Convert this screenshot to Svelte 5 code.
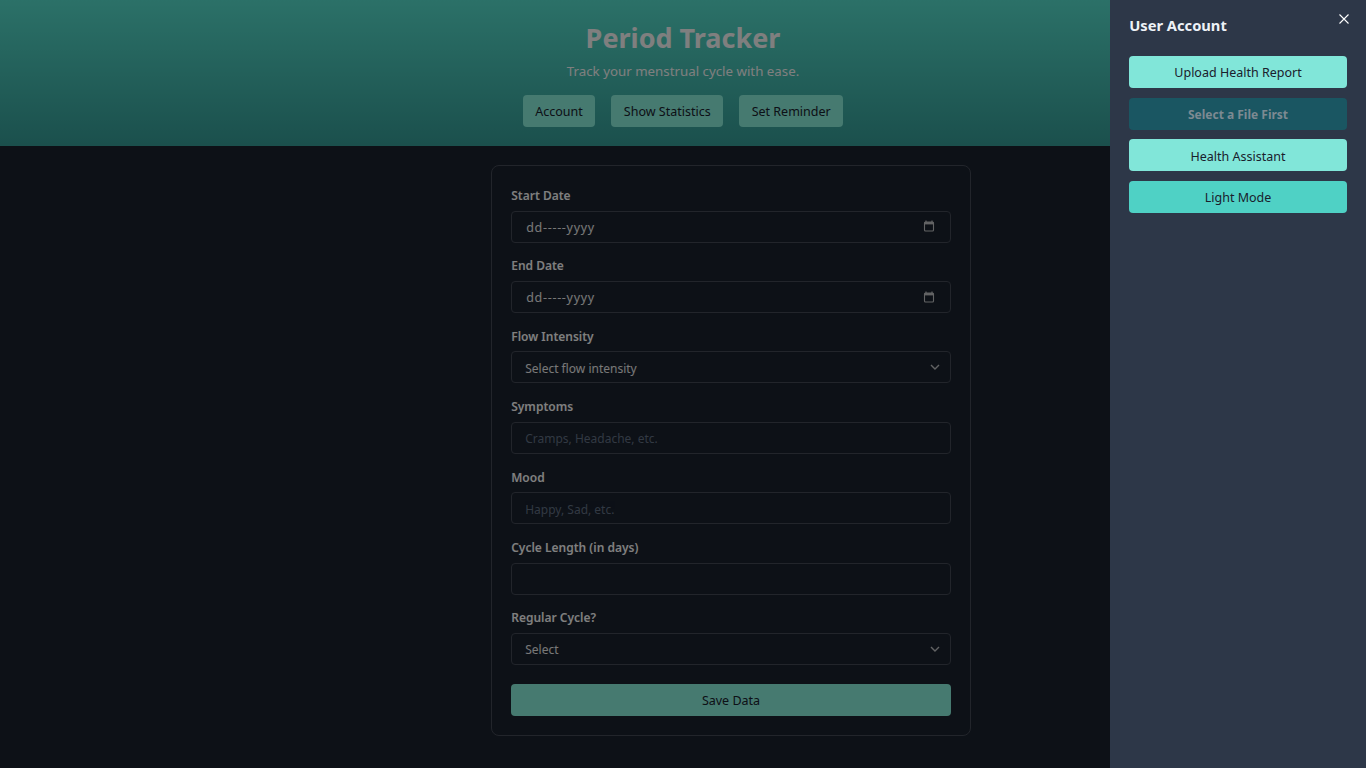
<script>
  const fields = [
    { label: "Start Date", kind: "date" },
    { label: "End Date", kind: "date" },
    { label: "Flow Intensity", kind: "select", value: "Select flow intensity" },
    { label: "Symptoms", kind: "text", placeholder: "Cramps, Headache, etc." },
    { label: "Mood", kind: "text", placeholder: "Happy, Sad, etc." },
    { label: "Cycle Length (in days)", kind: "text", placeholder: "" },
    { label: "Regular Cycle?", kind: "select", value: "Select" },
  ];
</script>

<div class="page">
  <header class="hero">
    <h1>Period Tracker</h1>
    <p>Track your menstrual cycle with ease.</p>
    <nav class="actions">
      <button class="btn">Account</button>
      <button class="btn">Show Statistics</button>
      <button class="btn">Set Reminder</button>
    </nav>
  </header>

  <main>
    <form class="card" onsubmit={(e) => e.preventDefault()}>
      {#each fields as f}
        <div class="field">
          <label for={f.label}>{f.label}</label>
          {#if f.kind === "date"}
            <div class="control">
              <input id={f.label} class="date" type="text" value="dd-----yyyy" />
              <svg class="picker" width="12" height="12" viewBox="0 0 12 12" aria-hidden="true">
                <path d="M3 0.5v1.5M9 0.5v1.5" stroke="#f0f0f0" stroke-width="1.2" fill="none" />
                <rect x="1.5" y="2" width="9" height="9" rx="1" stroke="#f0f0f0" stroke-width="1.1" fill="none" />
                <rect x="1.5" y="2" width="9" height="2.4" fill="#f0f0f0" />
              </svg>
            </div>
          {:else if f.kind === "select"}
            <div class="control">
              <select id={f.label}>
                <option>{f.value}</option>
              </select>
              <svg class="chevron" width="10" height="6" viewBox="0 0 10 6" aria-hidden="true">
                <path d="M1 1l4 4 4-4" stroke="#f0f0f0" stroke-width="1.4" fill="none" />
              </svg>
            </div>
          {:else}
            <input id={f.label} type="text" placeholder={f.placeholder} />
          {/if}
        </div>
      {/each}
      <button class="btn save" type="submit">Save Data</button>
    </form>
  </main>
</div>

<div class="backdrop"></div>

<aside class="drawer">
  <button class="close" aria-label="Close">
    <svg width="10" height="10" viewBox="0 0 10 10" aria-hidden="true">
      <path d="M0.5 0.5l9 9M9.5 0.5l-9 9" stroke="#fff" stroke-width="1.1" fill="none" />
    </svg>
  </button>
  <h2>User Account</h2>
  <div class="menu">
    <button class="item">Upload Health Report</button>
    <button class="item disabled" disabled>Select a File First</button>
    <button class="item">Health Assistant</button>
    <button class="item accent">Light Mode</button>
  </div>
</aside>

<style>
  :global(body) {
    background: #1a222e;
    font-family: "Noto Sans", "Open Sans", sans-serif;
    overflow: hidden;
  }

  .page {
    min-height: 768px;
    color: #f7fafc;
  }

  .hero {
    height: 146px;
    box-sizing: border-box;
    padding-top: 19px;
    text-align: center;
    background: linear-gradient(180deg, #57e2d0 0%, #36a09a 100%);
  }

  h1 {
    margin: 0;
    font-size: 27px;
    line-height: 38px;
    font-weight: 700;
    color: #fff;
  }

  .hero p {
    margin: 5px 0 0;
    font-size: 13.3px;
    line-height: 18px;
    color: #fff;
  }

  .actions {
    display: flex;
    justify-content: center;
    gap: 16px;
    margin-top: 15px;
  }

  .btn {
    height: 32px;
    padding: 0 12.5px;
    border: 0;
    border-radius: 4px;
    background: #8cf4e0;
    color: #1a222e;
    font: inherit;
    font-size: 12.5px;
  }

  main {
    display: flex;
    justify-content: center;
    padding-top: 19px;
    padding-left: 96px;
  }

  .card {
    width: 480px;
    box-sizing: border-box;
    padding: 19px 19.2px 19.2px;
    border: 1px solid #444a56;
    border-radius: 8px;
  }

  .field {
    height: 70.4px;
  }

  label {
    display: block;
    height: 25.6px;
    padding-top: 1px;
    box-sizing: border-box;
    font-size: 12px;
    line-height: 19px;
    font-weight: 600;
    color: #fff;
  }

  .control {
    position: relative;
  }

  input,
  select {
    display: block;
    width: 100%;
    height: 32px;
    box-sizing: border-box;
    padding: 2px 13px 0;
    border: 1px solid #444a56;
    border-radius: 4px;
    outline: 0;
    background: #1a222e;
    color: #f0f0f0;
    font: inherit;
    font-size: 12px;
    appearance: none;
  }

  input::placeholder {
    color: #718096;
    opacity: 0.85;
  }

  .date {
    padding-left: 14px;
    font-size: 12.5px;
    letter-spacing: 0.7px;
  }

  .picker {
    position: absolute;
    top: 9.6px;
    right: 16px;
    opacity: 0.8;
  }

  .chevron {
    position: absolute;
    top: 13px;
    right: 11px;
    opacity: 0.8;
  }

  .save {
    display: block;
    width: 100%;
    margin-top: 6px;
    padding-top: 1px;
  }

  .backdrop {
    position: fixed;
    inset: 0;
    background: rgba(0, 0, 0, 0.5);
  }

  .drawer {
    position: fixed;
    top: 0;
    right: 0;
    bottom: 0;
    width: 256px;
    box-sizing: border-box;
    padding: 18px 19.2px 19.2px;
    background: #2d3748;
    color: #edf2f7;
  }

  h2 {
    margin: 0;
    height: 38.2px;
    font-size: 14.7px;
    line-height: 14px;
    font-weight: 700;
  }

  .close {
    position: absolute;
    top: 14px;
    right: 17px;
    width: 10px;
    height: 10px;
    padding: 0;
    border: 0;
    background: none;
    line-height: 0;
  }

  .menu {
    display: flex;
    flex-direction: column;
    gap: 9.6px;
  }

  .item {
    height: 32px;
    padding: 1.4px 0 0;
    border: 0;
    border-radius: 4px;
    background: #81e6d9;
    color: #1a202c;
    font: inherit;
    font-size: 12.5px;
  }

  .disabled {
    background: #1a5662;
    color: #7d8a92;
    font-weight: 700;
    font-size: 12px;
  }

  .accent {
    background: #4fd1c5;
  }
</style>
